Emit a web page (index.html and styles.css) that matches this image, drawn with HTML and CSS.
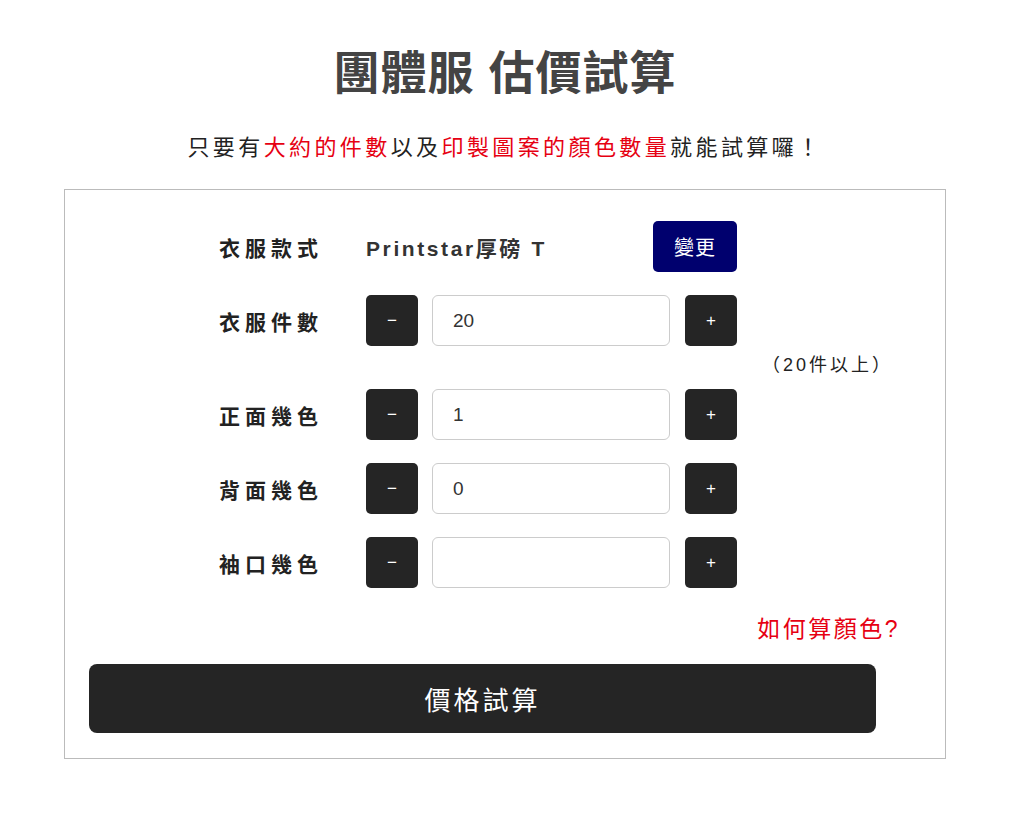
FILE: index.html
```html
<!DOCTYPE html>
<html lang="zh-Hant">
<head>
  <meta charset="UTF-8">
  <meta name="viewport" content="width=device-width, initial-scale=1.0">
  <title>團體服 估價試算</title>
  <link rel="stylesheet" href="styles.css">
</head>
<body>
  <div class="page">
    <h1 class="page-title">團體服 估價試算</h1>
    <p class="page-lead">只要有<span class="hl">大約的件數</span>以及<span class="hl">印製圖案的顏色數量</span>就能試算囉！</p>

    <div class="calc-box">
      <div class="form-row">
        <div class="form-label">衣服款式</div>
        <div class="form-control style-control">
          <span class="style-name">Printstar厚磅 T</span>
          <button class="btn-change">變更</button>
        </div>
      </div>

      <div class="form-row">
        <div class="form-label">衣服件數</div>
        <div class="form-control">
          <button class="btn-step">−</button>
          <input class="qty-input" type="text" value="20">
          <button class="btn-step">+</button>
        </div>
      </div>
      <div class="qty-note">（20件以上）</div>

      <div class="form-row">
        <div class="form-label">正面幾色</div>
        <div class="form-control">
          <button class="btn-step">−</button>
          <input class="qty-input" type="text" value="1">
          <button class="btn-step">+</button>
        </div>
      </div>

      <div class="form-row">
        <div class="form-label">背面幾色</div>
        <div class="form-control">
          <button class="btn-step">−</button>
          <input class="qty-input" type="text" value="0">
          <button class="btn-step">+</button>
        </div>
      </div>

      <div class="form-row">
        <div class="form-label">袖口幾色</div>
        <div class="form-control">
          <button class="btn-step">−</button>
          <input class="qty-input" type="text" value="">
          <button class="btn-step">+</button>
        </div>
      </div>

      <div class="help-line"><a href="#" class="help-link">如何算顏色?</a></div>

      <button class="btn-submit">價格試算</button>
    </div>
  </div>
</body>
</html>
```

FILE: styles.css
```css
:root {
  --text-color: #222;
  --title-color: #444;
  --accent-red: #e60012;
  --dark-btn: #252525;
  --navy: #00006e;
  --line-color: #bbb;
}

body {
  margin: 0;
  font-family: "Liberation Sans", "Noto Sans CJK TC", sans-serif;
  color: var(--text-color);
  background: #fff;
}

.page {
  width: 1010px;
  padding-top: 39px;
}

.page-title {
  margin: 0;
  text-align: center;
  font-size: 46px;
  line-height: 68px;
  font-weight: bold;
  color: var(--title-color);
  letter-spacing: 1px;
}

.page-lead {
  margin: 26px 0 0;
  text-align: center;
  font-size: 22px;
  line-height: 30px;
  letter-spacing: 3.4px;
  color: var(--text-color);
}

.hl {
  color: var(--accent-red);
}

.calc-box {
  width: 880px;
  margin: 26px auto 0;
  border: 1px solid var(--line-color);
  padding: 31px 0 25px;
}

.form-row {
  display: flex;
  align-items: center;
  padding-left: 154px;
  margin-bottom: 23px;
}

.form-label {
  width: 147px;
  font-size: 21px;
  font-weight: bold;
  letter-spacing: 5px;
}

.form-control {
  display: flex;
  align-items: center;
  width: 371px;
}

.style-control {
  justify-content: space-between;
}

.style-name {
  font-size: 21px;
  font-weight: bold;
  letter-spacing: 2.6px;
  color: #333;
}

.btn-change {
  width: 84px;
  height: 51px;
  border: 0;
  border-radius: 5px;
  background: var(--navy);
  color: #fff;
  font-family: inherit;
  font-size: 20px;
  letter-spacing: 1px;
  padding: 0;
}

.btn-step {
  width: 52px;
  height: 51px;
  border: 0;
  border-radius: 5px;
  background: var(--dark-btn);
  color: #fff;
  font-family: inherit;
  font-size: 17px;
  padding: 0;
}

.qty-input {
  box-sizing: border-box;
  width: 238px;
  height: 51px;
  margin: 0 15px 0 14px;
  border: 1.5px solid #ccc;
  border-radius: 6px;
  padding: 0 20px;
  font-family: inherit;
  font-size: 19px;
  color: #333;
  outline: none;
}

.qty-note {
  margin: -15px 0 13px;
  padding-left: 697px;
  font-size: 18px;
  line-height: 22px;
  letter-spacing: 3px;
  color: var(--text-color);
}

.help-line {
  margin-top: 26px;
  padding-right: 45px;
  text-align: right;
  line-height: 30px;
}

.help-link {
  font-size: 23px;
  letter-spacing: 2.5px;
  color: var(--accent-red);
  text-decoration: none;
}

.btn-submit {
  display: block;
  width: 787px;
  height: 69px;
  margin: 17px 0 0 24px;
  border: 0;
  border-radius: 8px;
  background: var(--dark-btn);
  color: #fff;
  font-family: inherit;
  font-size: 26px;
  letter-spacing: 3px;
}
```
